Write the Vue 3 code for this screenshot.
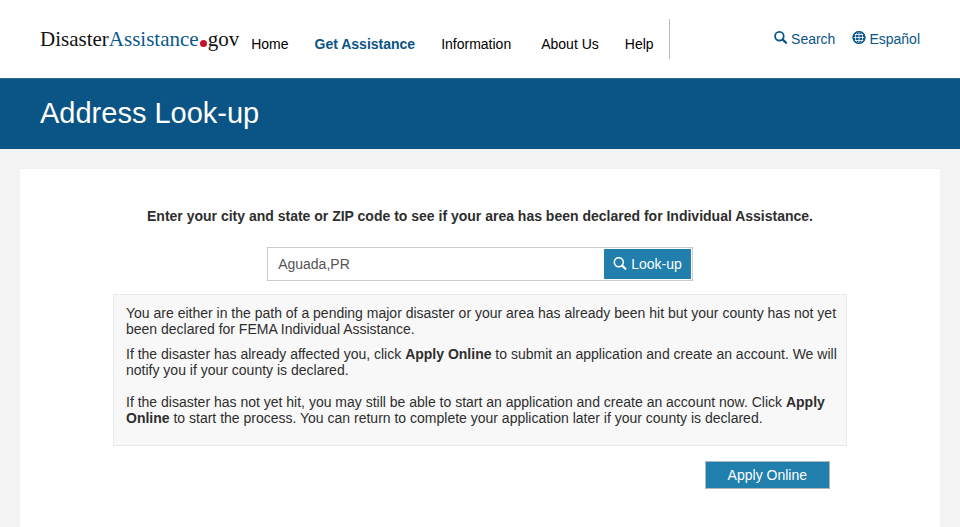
<script setup>
import { ref } from 'vue'

const place = ref('Aguada,PR')
const mainLinks = [
  { label: 'Home', active: false },
  { label: 'Get Assistance', active: true },
  { label: 'Information', active: false },
]
const helpLinks = ['About Us', 'Help']
</script>

<template>
  <div class="page">
    <header class="header">
      <a href="#" class="logo" aria-label="DisasterAssistance.gov">
        <span>Disaster</span><span class="logo-blue">Assistance</span><i class="logo-dot"></i><span>gov</span>
      </a>
      <nav class="nav">
        <div class="nav-group">
          <a v-for="link in mainLinks" :key="link.label" href="#" :class="{ active: link.active }">{{ link.label }}</a>
        </div>
        <div class="nav-group">
          <a v-for="label in helpLinks" :key="label" href="#">{{ label }}</a>
        </div>
      </nav>
      <div class="tools">
        <a href="#">
          <svg class="icon" viewBox="0 0 14 14" aria-hidden="true">
            <circle cx="5.4" cy="5.2" r="4.3" fill="none" stroke="currentColor" stroke-width="1.8" />
            <path d="M8.8 8.6l3.2 3.2" stroke="currentColor" stroke-width="2.3" stroke-linecap="round" />
          </svg>
          <span>Search</span>
        </a>
        <a href="#">
          <svg class="icon" viewBox="0 0 14 14" aria-hidden="true">
            <circle cx="7" cy="6.5" r="6.5" fill="currentColor" />
            <g fill="none" stroke="#fff" stroke-width="0.8">
              <ellipse cx="7" cy="6.5" rx="3.6" ry="6" />
              <path d="M7 1v11M1.2 6.5h11.6M2.3 3.5h9.4M2.3 9.5h9.4" />
            </g>
            <circle cx="7" cy="6.5" r="5.9" fill="none" stroke="currentColor" stroke-width="1.2" />
          </svg>
          <span>Español</span>
        </a>
      </div>
    </header>

    <div class="banner"><h1>Address Look-up</h1></div>

    <main class="card">
      <form class="lookup" @submit.prevent>
        <label for="place">Enter your city and state or ZIP code to see if your area has been declared for Individual Assistance.</label>
        <div class="field">
          <input id="place" v-model="place" type="text" />
          <button type="submit">
            <svg class="icon" viewBox="0 0 14 14" aria-hidden="true">
              <circle cx="5.8" cy="5.2" r="4.5" fill="none" stroke="currentColor" stroke-width="1.6" />
              <path d="M9.2 8.6l3.2 3.2" stroke="currentColor" stroke-width="2.2" stroke-linecap="round" />
            </svg>
            <span>Look-up</span>
          </button>
        </div>
      </form>

      <section class="notice">
        <p>You are either in the path of a pending major disaster or your area has already been hit but your county has not yet been declared for FEMA Individual Assistance.</p>
        <p>If the disaster has already affected you, click <strong>Apply Online</strong> to submit an application and create an account. We will notify you if your county is declared.</p>
        <p>If the disaster has not yet hit, you may still be able to start an application and create an account now. Click <strong>Apply Online</strong> to start the process. You can return to complete your application later if your county is declared.</p>
      </section>

      <div class="actions">
        <button type="button" class="apply">Apply Online</button>
      </div>
    </main>
  </div>
</template>

<style>
body {
  background: #f3f3f3;
}
</style>

<style scoped>
.page {
  display: flex;
  flex-direction: column;
  min-height: 100vh;
  font: 14px/16px "Liberation Sans", Arial, sans-serif;
  color: #2e2e2e;
  background: #f3f3f3;
}
.page * {
  box-sizing: border-box;
}
a {
  text-decoration: none;
}
.header {
  display: flex;
  align-items: center;
  height: 78px;
  padding: 0 40px;
  background: #fff;
}
.logo {
  display: flex;
  align-items: center;
  font: 21px/26px "Liberation Serif", "Times New Roman", serif;
  color: #111;
}
.logo-blue {
  color: #0a5a8c;
}
.logo-dot {
  width: 7px;
  height: 7px;
  margin: 8px 1px 0;
  border-radius: 50%;
  background: #c8102e;
}
.nav {
  display: flex;
  align-items: center;
  gap: 30px;
  height: 40px;
  margin-left: 12px;
  padding: 10px 15px 0 0;
  border-right: 1px solid #bbb;
}
.nav-group {
  display: flex;
  gap: 26px;
}
.nav a {
  color: #000;
}
.nav a.active {
  font-weight: bold;
  color: #0a5585;
}
.tools {
  display: flex;
  gap: 17px;
  margin-left: auto;
}
.tools a {
  display: flex;
  gap: 3px;
  color: #0a5585;
}
.icon {
  width: 14px;
  height: 14px;
}
.banner {
  padding: 18px 40px 19px;
  border-top: 1px solid #2a6c96;
  background: #0a5585;
  color: #fff;
}
h1 {
  margin: 0;
  font-size: 29px;
  line-height: 33px;
  font-weight: normal;
}
.card {
  flex: 1;
  margin: 20px 20px 0;
  padding: 39px 93px;
  background: #fff;
}
.lookup {
  display: flex;
  flex-direction: column;
  align-items: center;
  gap: 23px;
}
label {
  font-weight: bold;
}
.field {
  display: flex;
  width: 58%;
  height: 34px;
  padding: 1px;
  border: 1px solid #ccc;
}
input {
  flex: 1;
  min-width: 0;
  padding: 0 9px;
  border: 0;
  font: inherit;
  color: #555;
  background: #fff;
}
button {
  border: 0;
  font: inherit;
  color: #fff;
  background: #207fad;
}
.field button {
  display: flex;
  align-items: center;
  gap: 4px;
  padding: 0 9px;
}
.notice {
  margin-top: 13px;
  padding: 10px 4px 19px 12px;
  border: 1px solid #e8e8e8;
  background: #f8f8f8;
}
p {
  margin: 0 0 9px;
}
p:nth-child(2) {
  margin-bottom: 16px;
}
p:last-child {
  margin-bottom: 0;
}
.actions {
  display: flex;
  justify-content: flex-end;
  padding: 15px 17px 0 0;
}
.apply {
  padding: 5px 22px;
  border: 1px solid #b0b8bd;
}
</style>
